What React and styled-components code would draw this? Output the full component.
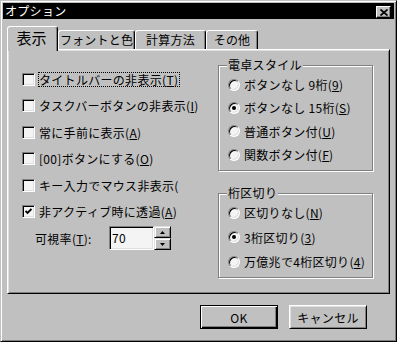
import React from 'react';
import styled, { createGlobalStyle } from 'styled-components';

const GlobalStyle = createGlobalStyle`
  html, body { margin: 0; padding: 0; background: #c0c0c0; }
  body {
    font-family: "Noto Sans CJK JP", "Liberation Sans", sans-serif;
    font-size: 12px;
    letter-spacing: 0.3px;
    color: #000;
  }
`;

// ---------------- window frame ----------------
const Window = styled.div`
  width: 397px;
  height: 342px;
  box-sizing: border-box;
  background: #c0c0c0;
  border: 1px solid;
  border-color: #c0c0c0 #000 #000 #c0c0c0;
  box-shadow: inset 1px 1px #fff, inset -1px -1px #808080;
  padding: 2px;
  display: flex;
  flex-direction: column;
`;

const TitleBar = styled.div`
  height: 16px;
  background: #000;
  color: #fff;
  display: flex;
  align-items: center;
  justify-content: space-between;
  padding: 0 3px 0 2px;
  line-height: 16px;
`;

const CloseButton = styled.div`
  width: 15px;
  height: 12px;
  margin-top: 2px;
  box-sizing: border-box;
  background: #c0c0c0;
  border: 1px solid;
  border-color: #fff #000 #000 #fff;
  box-shadow: inset -1px -1px #808080;
  display: flex;
  align-items: center;
  justify-content: center;
`;

const Body = styled.div`
  padding: 7px 4px 0 4px;
  display: flex;
  flex-direction: column;
`;

// ---------------- tabs ----------------
const TabRow = styled.div`
  height: 23px;
  display: flex;
  align-items: flex-end;
  position: relative;
  z-index: 1;
`;

const Tab = styled.div`
  box-sizing: border-box;
  width: ${({ $w }) => $w}px;
  height: ${({ $active }) => ($active ? 25 : 19)}px;
  margin-bottom: ${({ $active }) => ($active ? -2 : 0)}px;
  background: #c0c0c0;
  border-top: 1px solid #fff;
  border-left: 1px solid #fff;
  border-right: 1px solid #000;
  box-shadow: inset -1px 0 #808080;
  border-radius: 3px 3px 0 0;
  display: flex;
  justify-content: center;
  padding-top: ${({ $active }) => ($active ? 2 : 0)}px;
  padding-right: ${({ $active }) => ($active ? 2 : 0)}px;
  font-size: ${({ $active }) => ($active ? 15 : 12)}px;
  line-height: ${({ $active }) => ($active ? 18 : 17)}px;
  letter-spacing: ${({ $active }) => ($active ? 0 : 0.2)}px;
`;

const Panel = styled.div`
  width: 383px;
  height: 245px;
  box-sizing: border-box;
  border: 1px solid;
  border-color: #fff #000 #000 #fff;
  box-shadow: inset 1px 1px #dfdfdf, inset -1px -1px #808080;
  display: flex;
  align-items: flex-start;
  padding: 15px 0 0 14px;
`;

// ---------------- left column ----------------
const LeftCol = styled.div`
  width: 196px;
  padding-top: 1px;
  display: flex;
  flex-direction: column;
`;

const CheckRow = styled.div`
  height: 26.5px;
  display: flex;
  align-items: center;
  gap: 3px;
  white-space: nowrap;
  overflow: hidden;
`;

const CheckBox = styled.span`
  flex: none;
  width: 13px;
  height: 13px;
  box-sizing: border-box;
  border: 1px solid;
  border-color: #808080 #fff #fff #808080;
  box-shadow: inset 1px 1px #000, inset -1px -1px #dfdfdf;
  background: #f4f4f4;
  display: flex;
  align-items: center;
  justify-content: center;
`;

const Label = styled.span`
  line-height: 13px;
  padding: 0 1px 0 0;
  border: 1px dotted ${({ $focus }) => ($focus ? '#000' : 'transparent')};
`;

const SpinRow = styled.div`
  height: 26.5px;
  margin-left: 13px;
  display: flex;
  align-items: center;
`;

const SpinLabel = styled.span`
  width: 74px;
  flex: none;
`;

const SpinInput = styled.div`
  width: 45px;
  height: 24px;
  box-sizing: border-box;
  border: 1px solid;
  border-color: #808080 #fff #fff #808080;
  box-shadow: inset 1px 1px #000, inset -1px -1px #dfdfdf;
  background: #f4f4f4;
  padding: 0 0 0 2px;
  line-height: 22px;
`;

const SpinButtons = styled.div`
  display: flex;
  flex-direction: column;
`;

const SpinButton = styled.div`
  width: 17px;
  height: 12px;
  box-sizing: border-box;
  background: #c0c0c0;
  border: 1px solid;
  border-color: #dfdfdf #000 #000 #dfdfdf;
  box-shadow: inset 1px 1px #fff, inset -1px -1px #808080;
  display: flex;
  align-items: center;
  justify-content: center;
`;

// ---------------- right column ----------------
const RightCol = styled.div`
  width: 155px;
  display: flex;
  flex-direction: column;
`;

const Group = styled.div`
  position: relative;
  box-sizing: border-box;
  width: 155px;
  height: ${({ $h }) => $h}px;
  margin-top: ${({ $mt }) => $mt || 0}px;
  border: 1px solid #808080;
  box-shadow: inset 1px 1px #fff, 1px 1px #fff;
  padding: ${({ $pt }) => $pt}px 0 0 9px;
  display: flex;
  flex-direction: column;
`;

const Legend = styled.span`
  position: absolute;
  top: -8px;
  left: 8px;
  line-height: 14px;
  padding: 0 1px;
  background: #c0c0c0;
`;

const RadioRow = styled.div`
  height: ${({ $h }) => $h}px;
  display: flex;
  align-items: center;
  gap: 4px;
  white-space: nowrap;
  overflow: hidden;
`;

const Radio = styled.span`
  flex: none;
  position: relative;
  width: 12px;
  height: 12px;
  box-sizing: border-box;
  border-radius: 50%;
  border: 1px solid;
  border-color: #808080 #fff #fff #808080;
  box-shadow: inset 1px 1px #000, inset -1px -1px #dfdfdf;
  background: #f4f4f4;

  &::after {
    content: '';
    display: ${({ $checked }) => ($checked ? 'block' : 'none')};
    position: absolute;
    left: 3px;
    top: 3px;
    width: 4px;
    height: 4px;
    border-radius: 50%;
    background: #000;
  }
`;

// ---------------- footer ----------------
const Footer = styled.div`
  display: flex;
  justify-content: flex-end;
  gap: 11px;
  padding: 11px 23px 0 0;
`;

const Button = styled.div`
  width: 78px;
  height: 24px;
  box-sizing: border-box;
  background: #c0c0c0;
  border: 1px solid;
  border-color: ${({ $default }) => ($default ? '#000' : '#fff #000 #000 #fff')};
  box-shadow: ${({ $default }) =>
    $default
      ? 'inset 1px 1px #fff, inset -1px -1px #000, inset -2px -2px #808080'
      : 'inset 1px 1px #dfdfdf, inset -1px -1px #808080'};
  display: flex;
  align-items: center;
  justify-content: center;
`;

const Check = () => (
  <svg width="7" height="7" viewBox="0 0 7 7">
    <polyline points="0.5,3 2.5,5 6.5,1" fill="none" stroke="#000" strokeWidth="1.8" />
  </svg>
);

const Arrow = ({ up }) => (
  <svg width="5" height="3" viewBox="0 0 5 3">
    <polygon points={up ? '2.5,0 5,3 0,3' : '0,0 5,0 2.5,3'} fill="#000" />
  </svg>
);

const checks = [
  { text: 'タイトルバーの非表示', key: 'T', focus: true },
  { text: 'タスクバーボタンの非表示', key: 'I' },
  { text: '常に手前に表示', key: 'A' },
  { text: '[00]ボタンにする', key: 'O' },
  { text: 'キー入力でマウス非表示(', key: null },
  { text: '非アクティブ時に透過', key: 'A', checked: true },
];

const styles = [
  { text: 'ボタンなし 9桁', key: '9' },
  { text: 'ボタンなし 15桁', key: 'S', checked: true },
  { text: '普通ボタン付', key: 'U' },
  { text: '関数ボタン付', key: 'F' },
];

const separators = [
  { text: '区切りなし', key: 'N' },
  { text: '3桁区切り', key: '3', checked: true },
  { text: '万億兆で4桁区切り', key: '4' },
];

const Mnemonic = ({ k }) => (k ? <>(<u>{k}</u>)</> : null);

export default function App() {
  return (
    <>
      <GlobalStyle />
      <Window>
        <TitleBar>
          <span>オプション</span>
          <CloseButton>
            <svg width="8" height="7" viewBox="0 0 8 7">
              <path d="M0.5 0.5 L7.5 6.5 M7.5 0.5 L0.5 6.5" stroke="#000" strokeWidth="1.7" />
            </svg>
          </CloseButton>
        </TitleBar>
        <Body>
          <TabRow>
            <Tab $w={51} $active>表示</Tab>
            <Tab $w={77}>フォントと色</Tab>
            <Tab $w={71}>計算方法</Tab>
            <Tab $w={52}>その他</Tab>
          </TabRow>
          <Panel>
            <LeftCol>
              {checks.map((c, i) => (
                <CheckRow key={i}>
                  <CheckBox>{c.checked && <Check />}</CheckBox>
                  <Label $focus={c.focus}>
                    {c.text}
                    <Mnemonic k={c.key} />
                  </Label>
                </CheckRow>
              ))}
              <SpinRow>
                <SpinLabel>
                  可視率(<u>T</u>):
                </SpinLabel>
                <SpinInput>70</SpinInput>
                <SpinButtons>
                  <SpinButton><Arrow up /></SpinButton>
                  <SpinButton><Arrow /></SpinButton>
                </SpinButtons>
              </SpinRow>
            </LeftCol>
            <RightCol>
              <Group $h={106} $pt={7}>
                <Legend>電卓スタイル</Legend>
                {styles.map((r, i) => (
                  <RadioRow key={i} $h={23.3}>
                    <Radio $checked={r.checked} />
                    <span>
                      {r.text}
                      <Mnemonic k={r.key} />
                    </span>
                  </RadioRow>
                ))}
              </Group>
              <Group $h={85} $mt={22} $pt={6.5}>
                <Legend>桁区切り</Legend>
                {separators.map((r, i) => (
                  <RadioRow key={i} $h={24.5}>
                    <Radio $checked={r.checked} />
                    <span>
                      {r.text}
                      <Mnemonic k={r.key} />
                    </span>
                  </RadioRow>
                ))}
              </Group>
            </RightCol>
          </Panel>
          <Footer>
            <Button $default>OK</Button>
            <Button>キャンセル</Button>
          </Footer>
        </Body>
      </Window>
    </>
  );
}
